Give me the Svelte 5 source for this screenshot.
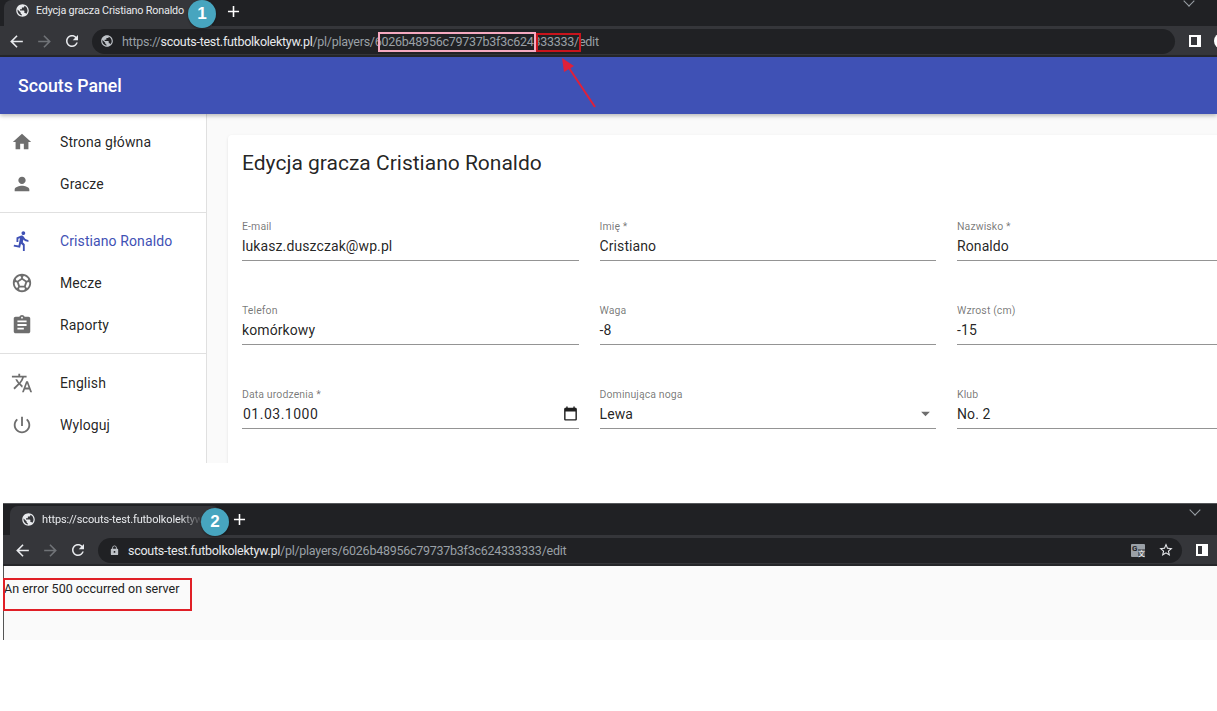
<script>
	const icons = {
		home: 'M10 20v-6h4v6h5v-8h3L12 3 2 12h3v8z',
		person: 'M12 12c2.21 0 4-1.79 4-4s-1.79-4-4-4-4 1.79-4 4 1.79 4 4 4zm0 2c-2.67 0-8 1.34-8 4v2h16v-2c0-2.66-5.33-4-8-4z',
		run: 'M13.49 5.48c1.1 0 2-.9 2-2s-.9-2-2-2-2 .9-2 2 .9 2 2 2zm-3.6 13.9l1-4.4 2.1 2v6h2v-7.5l-2.1-2 .6-3c1.3 1.5 3.3 2.5 5.5 2.5v-2c-1.9 0-3.5-1-4.3-2.4l-1-1.6c-.4-.6-1-1-1.7-1-.3 0-.5.1-.8.1l-5.2 2.2v4.7h2v-3.4l1.8-.7-1.6 8.1-4.9-1-.4 2 7 1.4z',
		soccer: 'M12 2C6.48 2 2 6.48 2 12s4.48 10 10 10 10-4.48 10-10S17.52 2 12 2zm1 3.3l1.35-.95c1.82.56 3.37 1.76 4.38 3.34l-.39 1.34-1.35.46L13 6.7V5.3zm-3.35-.95L11 5.3v1.4L7.01 9.49l-1.35-.46-.39-1.34c1.01-1.57 2.56-2.77 4.38-3.34zM7.08 17.11l-1.14.1C4.73 15.81 4 13.99 4 12c0-.12.01-.23.02-.35l1-.73 1.38.48 1.46 4.34-.78 1.37zm7.42 2.48c-.79.26-1.63.41-2.5.41s-1.71-.15-2.5-.41l-.69-1.49.64-1.1h5.11l.64 1.11-.7 1.48zM14.27 15H9.73l-1.35-4.02L12 8.44l3.63 2.54L14.27 15zm3.79 2.21l-1.14-.1-.79-1.37 1.46-4.34 1.39-.47 1 .73c.01.11.02.22.02.34 0 1.99-.73 3.81-1.94 5.21z',
		assignment: 'M19 3h-4.18C14.4 1.84 13.3 1 12 1c-1.3 0-2.4.84-2.82 2H5c-1.1 0-2 .9-2 2v14c0 1.1.9 2 2 2h14c1.1 0 2-.9 2-2V5c0-1.1-.9-2-2-2zm-7 0c.55 0 1 .45 1 1s-.45 1-1 1-1-.45-1-1 .45-1 1-1zm2 14H7v-2h7v2zm3-4H7v-2h10v2zm0-4H7V7h10v2z',
		translate: 'M12.87 15.07l-2.54-2.51.03-.03c1.74-1.94 2.98-4.17 3.71-6.53H17V4h-7V2H8v2H1v1.99h11.17C11.5 7.92 10.44 9.75 9 11.35 8.07 10.32 7.3 9.19 6.69 8h-2c.73 1.63 1.73 3.17 2.98 4.56l-5.09 5.02L4 19l5-5 3.11 3.11.76-2.04zM18.5 10h-2L12 22h2l1.12-3h4.75L21 22h2l-4.5-12zm-2.62 7l1.62-4.33L19.12 17h-3.24z',
		power: 'M13 3h-2v10h2V3zm4.83 2.17l-1.42 1.42C17.99 7.86 19 9.81 19 12c0 3.87-3.13 7-7 7s-7-3.13-7-7c0-2.19 1.01-4.14 2.58-5.42L6.17 5.17C4.23 6.82 3 9.26 3 12c0 4.97 4.03 9 9 9s9-4.03 9-9c0-2.74-1.23-5.18-3.17-6.83z',
		globe: 'M12 2C6.48 2 2 6.48 2 12s4.48 10 10 10 10-4.48 10-10S17.52 2 12 2zm-1 17.93c-3.95-.49-7-3.85-7-7.93 0-.62.08-1.21.21-1.79L9 15v1c0 1.1.9 2 2 2v1.93zm6.9-2.54c-.26-.81-1-1.39-1.9-1.39h-1v-3c0-.55-.45-1-1-1H8v-2h2c.55 0 1-.45 1-1V7h2c1.1 0 2-.9 2-2v-.41c2.93 1.19 5 4.06 5 7.41 0 2.08-.8 3.97-2.1 5.39z',
		lock: 'M18 8h-1V6c0-2.76-2.24-5-5-5S7 3.24 7 6v2H6c-1.1 0-2 .9-2 2v10c0 1.1.9 2 2 2h12c1.1 0 2-.9 2-2V10c0-1.1-.9-2-2-2zm-6 9c-1.1 0-2-.9-2-2s.9-2 2-2 2 .9 2 2-.9 2-2 2zm3.1-9H8.9V6c0-1.71 1.39-3.1 3.1-3.1 1.71 0 3.1 1.39 3.1 3.1v2z',
		star: 'M22 9.24l-7.19-.62L12 2 9.19 8.63 2 9.24l5.46 4.73L5.82 21 12 17.27 18.18 21l-1.63-7.03L22 9.24zM12 15.4l-3.76 2.27 1-4.28-3.32-2.88 4.38-.38L12 6.1l1.71 4.04 4.38.38-3.32 2.88 1 4.28L12 15.4z',
		back: 'M20 11H7.83l5.59-5.59L12 4l-8 8 8 8 1.41-1.41L7.83 13H20v-2z',
		forward: 'M12 4l-1.41 1.41L16.17 11H4v2h12.17l-5.58 5.59L12 20l8-8z',
		refresh: 'M17.65 6.35C16.2 4.9 14.35 4 12 4c-4.42 0-7.99 3.58-7.99 8s3.57 8 7.99 8c3.73 0 6.84-2.55 7.73-6h-2.08c-.82 2.33-3.04 4-5.65 4-3.31 0-6-2.69-6-6s2.69-6 6-6c1.66 0 3.14.69 4.22 1.78L13 11h7V4l-2.35 2.35z',
		plus: 'M19 13h-6v6h-2v-6H5v-2h6V5h2v6h6v2z',
		calendar: 'M19 4h-1V2h-2v2H8V2H6v2H5c-1.1 0-2 .9-2 2v14c0 1.1.9 2 2 2h14c1.1 0 2-.9 2-2V6c0-1.1-.9-2-2-2zm0 16H5V9h14v11z',
		caret: 'M7 10l5 5 5-5z'
	};

	const navGroups = [
		[
			{ icon: 'home', label: 'Strona główna' },
			{ icon: 'person', label: 'Gracze' }
		],
		[
			{ icon: 'run', label: 'Cristiano Ronaldo', active: true },
			{ icon: 'soccer', label: 'Mecze' },
			{ icon: 'assignment', label: 'Raporty' }
		],
		[
			{ icon: 'translate', label: 'English' },
			{ icon: 'power', label: 'Wyloguj' }
		]
	];

	const fields = [
		{ label: 'E-mail', value: 'lukasz.duszczak@wp.pl' },
		{ label: 'Imię *', value: 'Cristiano' },
		{ label: 'Nazwisko *', value: 'Ronaldo' },
		{ label: 'Telefon', value: 'komórkowy' },
		{ label: 'Waga', value: '-8' },
		{ label: 'Wzrost (cm)', value: '-15' },
		{ label: 'Data urodzenia *', value: '01.03.1000', trail: 'calendar', date: true },
		{ label: 'Dominująca noga', value: 'Lewa', trail: 'caret' },
		{ label: 'Klub', value: 'No. 2' }
	];
</script>

{#snippet icon(name, size = 24)}
	<svg class="icon" width={size} height={size} viewBox="0 0 24 24" fill="currentColor"><path d={icons[name]} /></svg>
{/snippet}

{#snippet navButtons()}
	<span class="nav-btn">{@render icon('back', 19)}</span>
	<span class="nav-btn dim">{@render icon('forward', 19)}</span>
	<span class="nav-btn">{@render icon('refresh', 18)}</span>
{/snippet}

<div class="page">
	<section class="shot first">
		<div class="tabstrip">
			<div class="tab">
				<span class="favicon">{@render icon('globe', 15)}</span>
				<span class="tab-title">Edycja gracza Cristiano Ronaldo</span>
			</div>
			<span class="new-tab">{@render icon('plus', 19)}</span>
			<span class="chevron"></span>
		</div>
		<div class="toolbar">
			{@render navButtons()}
			<div class="omnibox">
				<span class="site">{@render icon('globe', 14)}</span>
				<span class="url"><span class="soft">https://</span>scouts-test.futbolkolektyw.pl<span class="soft">/pl/players/6026b48956c79737b3f3c624333333/edit</span></span>
			</div>
			<span class="panel"></span>
			<span class="avatar"></span>
		</div>

		<header class="appbar">Scouts Panel</header>

		<div class="app">
			<nav class="sidebar">
				{#each navGroups as group}
					<ul>
						{#each group as item}
							<li class:active={item.active}>
								<span class="nav-icon">{@render icon(item.icon, 22)}</span>
								{item.label}
							</li>
						{/each}
					</ul>
				{/each}
			</nav>
			<main class="content">
				<div class="card">
					<h1>Edycja gracza Cristiano Ronaldo</h1>
					<div class="form">
						{#each fields as field}
							<div class="field">
								<span class="label">{field.label}</span>
								<div class="input">
									<span class:date={field.date}>{field.value}</span>
									{#if field.trail}
										<span class="trail" class:dark={field.trail === 'calendar'}>{@render icon(field.trail, field.trail === 'calendar' ? 17 : 21)}</span>
									{/if}
								</div>
							</div>
						{/each}
					</div>
				</div>
			</main>
		</div>
	</section>

	<section class="shot second">
		<div class="tabstrip">
			<div class="tab">
				<span class="favicon">{@render icon('globe', 15)}</span>
				<span class="tab-title faded">https://scouts-test.futbolkolektyw</span>
			</div>
			<span class="new-tab">{@render icon('plus', 19)}</span>
			<span class="chevron"></span>
		</div>
		<div class="toolbar">
			{@render navButtons()}
			<div class="omnibox">
				<span class="site small">{@render icon('lock', 11)}</span>
				<span class="url">scouts-test.futbolkolektyw.pl<span class="soft">/pl/players/6026b48956c79737b3f3c624333333/edit</span></span>
				<span class="translate-btn"><b>G</b><i>文</i></span>
				<span class="star">{@render icon('star', 16)}</span>
			</div>
			<span class="panel"></span>
		</div>
		<div class="error-page">An error 500 occurred on server</div>
	</section>

	<!-- annotations drawn over the screenshots -->
	<span class="badge one">1</span>
	<span class="badge two">2</span>
	<span class="mark pink"></span>
	<span class="mark red"></span>
	<span class="mark error"></span>
	<svg class="arrow" width="60" height="60" viewBox="0 0 60 60">
		<path d="M46 50 L18 8" stroke="#e0203a" stroke-width="2" fill="none" />
		<path d="M13 1 L25 9 L15 15 Z" fill="#e0203a" />
	</svg>
</div>

<style>
	:global(body) {
		margin: 0;
		background: #fff;
	}

	.page {
		position: relative;
		width: 1217px;
		height: 711px;
		overflow: hidden;
		font-family: Roboto, sans-serif;
		color: rgba(0, 0, 0, 0.87);
	}

	.icon {
		display: block;
	}

	.shot {
		display: flex;
		flex-direction: column;
	}

	.first {
		height: 463px;
	}

	.second {
		margin: 40px 0 0 3px;
	}

	/* browser chrome */
	.tabstrip {
		display: flex;
		align-items: flex-end;
		height: 26px;
		background: #202124;
		position: relative;
	}

	.second .tabstrip {
		height: 32px;
		border-top: 1px solid #55575a;
		box-sizing: border-box;
		padding-left: 7px;
	}

	.tab {
		display: flex;
		align-items: center;
		box-sizing: border-box;
		width: 208px;
		height: 26px;
		margin-left: 4px;
		padding: 0 0 5px 11px;
		background: #35363a;
		border-radius: 8px 8px 0 0;
		color: #e8eaed;
	}

	.second .tab {
		margin-left: 0;
		height: 29px;
		width: 210px;
		padding-bottom: 3px;
	}

	.favicon {
		margin-right: 6px;
		flex: none;
	}

	.tab-title {
		font: 11px Roboto, sans-serif;
		letter-spacing: -0.12px;
		white-space: nowrap;
	}

	.first .tab-title {
		font-size: 10.8px;
		letter-spacing: -0.2px;
	}

	.tab-title.faded {
		-webkit-mask-image: linear-gradient(90deg, #000 85%, transparent);
		mask-image: linear-gradient(90deg, #000 85%, transparent);
	}

	.new-tab {
		margin: 0 0 5px 12px;
		color: #fff;
	}

	.second .new-tab {
		margin: 0 0 6px 10px;
	}

	.chevron {
		position: absolute;
		right: 24px;
		top: -3px;
		width: 7px;
		height: 7px;
		border: solid #9aa0a6;
		border-width: 0 1px 1px 0;
		transform: rotate(45deg);
	}

	.second .chevron {
		right: 18px;
		top: 2px;
	}

	.toolbar {
		display: flex;
		align-items: center;
		box-sizing: border-box;
		height: 31px;
		padding: 1px 0 0 7px;
		background: #35363a;
		border-bottom: 2px solid #26272a;
		color: #e8eaed;
	}

	.second .toolbar {
		padding-left: 10px;
	}

	.nav-btn {
		width: 19px;
		margin-right: 9px;
	}

	.nav-btn.dim {
		color: #707377;
	}

	.omnibox {
		display: flex;
		align-items: center;
		flex: 1;
		box-sizing: border-box;
		height: 25px;
		margin-left: 1px;
		padding: 0 8px;
		background: #202124;
		border-radius: 12.5px;
		min-width: 0;
	}

	.site {
		width: 22px;
		flex: none;
		color: #bdc1c6;
	}

	.site.small {
		padding-left: 3px;
		box-sizing: border-box;
	}

	.url {
		font: 12.5px Roboto, sans-serif;
		letter-spacing: -0.26px;
		color: #e8eaed;
		white-space: nowrap;
		flex: 1;
	}

	.soft {
		color: #9aa0a6;
	}

	.translate-btn {
		position: relative;
		width: 14px;
		height: 13px;
		margin-right: 13px;
		background: #9aa0a6;
		border-radius: 1px;
		font: 8px Roboto, sans-serif;
		color: #202124;
	}

	.translate-btn b {
		position: absolute;
		left: 1px;
		top: 1px;
		line-height: 8px;
	}

	.translate-btn i {
		position: absolute;
		right: 0;
		bottom: 0;
		font: 7px/8px "Noto Sans CJK SC", sans-serif;
		background: #5f6368;
		color: #fff;
	}

	.star {
		margin-right: 0;
		color: #e8eaed;
	}

	.panel {
		flex: none;
		box-sizing: border-box;
		width: 12px;
		height: 12px;
		margin: 0 0 0 14px;
		background: #35363a;
		border: solid #fff;
		border-width: 2px 2px 2px 6px;
		transform: scaleX(-1);
	}

	.first .panel {
		margin-right: 13px;
		transform: none;
		border-width: 2px 4px 2px 2px;
	}

	.second .panel {
		margin-right: 9px;
	}

	.avatar {
		flex: none;
		width: 16px;
		height: 16px;
		margin-right: -13px;
		background: #fff;
		border-radius: 50%;
	}

	.first .omnibox {
		flex: 0 0 1083px;
	}

	/* app */
	.appbar {
		position: relative;
		z-index: 1;
		display: flex;
		align-items: center;
		height: 57px;
		padding-left: 18px;
		background: #3f51b5;
		color: #fff;
		font-size: 17.7px;
		font-weight: 500;
		box-shadow: 0 2px 4px rgba(0, 0, 0, 0.25);
	}

	.app {
		display: flex;
		flex: 1;
		min-height: 0;
	}

	.sidebar {
		box-sizing: border-box;
		flex: none;
		width: 207px;
		border-right: 1px solid #e0e0e0;
		background: #fff;
	}

	ul {
		margin: 0;
		padding: 7px 0;
		list-style: none;
		border-bottom: 1px solid #e0e0e0;
	}

	ul:last-child {
		padding-top: 8px;
		border-bottom: 0;
	}

	li {
		display: flex;
		align-items: center;
		height: 42px;
		padding-left: 11px;
		font-size: 14px;
		letter-spacing: 0.1px;
	}

	.nav-icon {
		width: 49px;
		color: #6e6e6e;
	}

	li.active,
	li.active .nav-icon {
		color: #3f51b5;
	}

	.content {
		flex: 1;
		min-width: 0;
		overflow: hidden;
		padding: 21px 0 0 21px;
		background: #fafafa;
	}

	.card {
		box-sizing: border-box;
		width: 1100px;
		height: 400px;
		padding: 14px;
		background: #fff;
		border-radius: 4px;
		box-shadow: 0 1px 3px rgba(0, 0, 0, 0.1);
	}

	h1 {
		margin: 0 0 43px;
		font-size: 21px;
		font-weight: 400;
		line-height: 28px;
	}

	.form {
		display: grid;
		grid-template-columns: repeat(3, 336.5px);
		column-gap: 21px;
		row-gap: 43px;
	}

	.field {
		display: flex;
		flex-direction: column;
		height: 41px;
	}

	.label {
		font-size: 10.5px;
		line-height: 13px;
		color: rgba(0, 0, 0, 0.54);
		letter-spacing: 0.1px;
	}

	.input {
		display: flex;
		align-items: center;
		justify-content: space-between;
		flex: 1;
		padding-bottom: 2px;
		font-size: 14px;
		letter-spacing: 0.1px;
		border-bottom: 1px solid #949494;
	}

	.date {
		padding-left: 1px;
		letter-spacing: 0.5px;
	}

	.trail {
		color: #6e6e6e;
	}

	.trail.dark {
		color: #1f1f1f;
	}

	.error-page {
		box-sizing: border-box;
		height: 74px;
		padding: 15px 0 0 0;
		background: #fafafa;
		border-left: 1px solid #555;
		font-size: 12.5px;
		line-height: 15px;
		color: #222;
	}

	/* annotations */
	.badge {
		position: absolute;
		display: flex;
		align-items: center;
		justify-content: center;
		width: 28px;
		height: 28px;
		background: #47a5bf;
		border-radius: 50%;
		color: #fff;
		font: 700 17px "Liberation Sans", sans-serif;
		box-shadow: 0 1px 2px rgba(0, 0, 0, 0.4);
	}

	.badge.one {
		left: 188px;
		top: 0;
	}

	.badge.two {
		left: 201px;
		top: 508px;
	}

	.mark {
		position: absolute;
		box-sizing: border-box;
		border: 2px solid;
	}

	.mark.pink {
		left: 378px;
		top: 32px;
		width: 158px;
		height: 20px;
		border-color: #f5a9c0;
	}

	.mark.red {
		left: 536px;
		top: 33px;
		width: 45px;
		height: 19px;
		border-color: #c8141c;
	}

	.mark.error {
		left: 3px;
		top: 578px;
		width: 189px;
		height: 33px;
		border-color: #e01f26;
	}

	.arrow {
		position: absolute;
		z-index: 2;
		left: 549px;
		top: 57px;
	}
</style>
